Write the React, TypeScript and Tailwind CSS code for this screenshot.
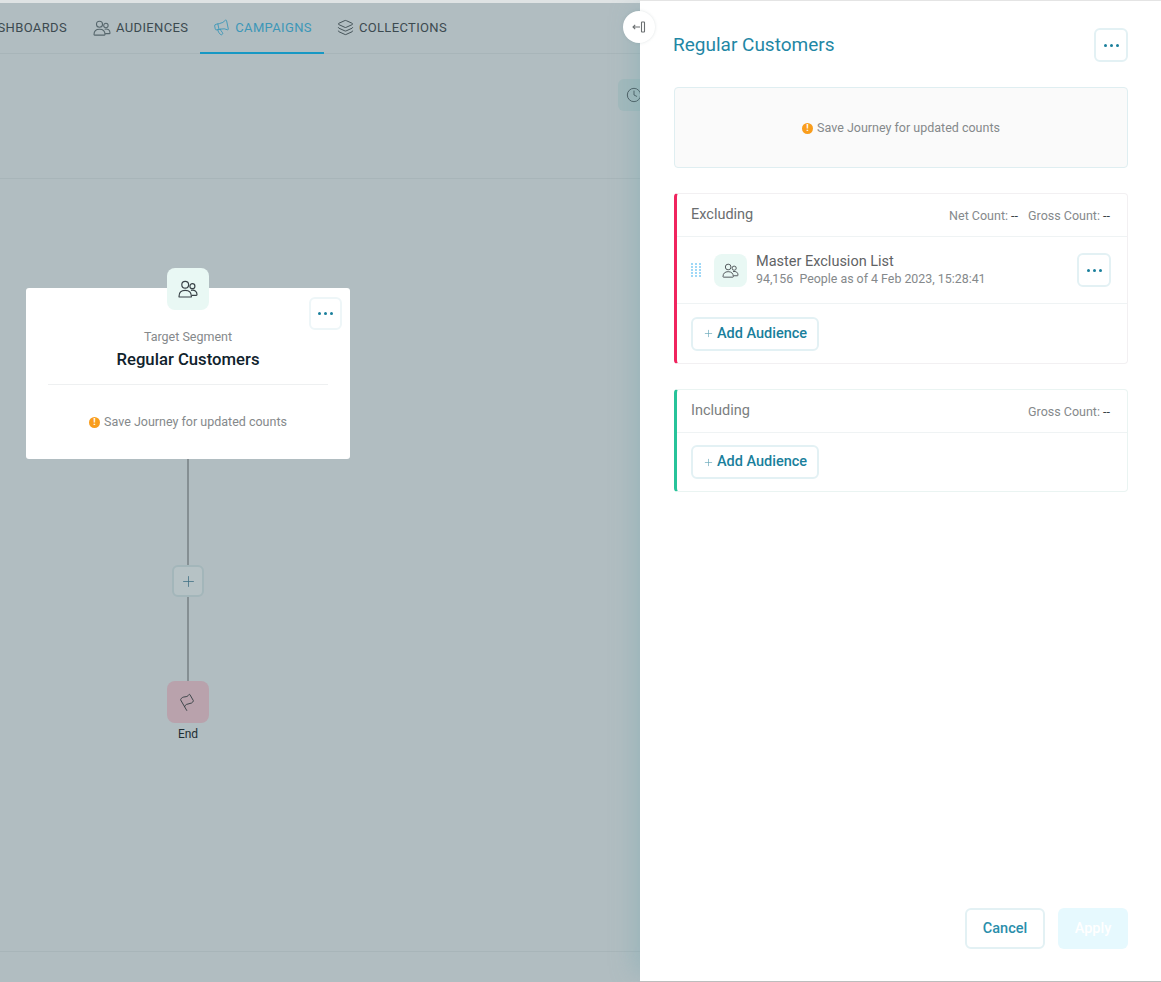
import { Clock, Flag, Layers, Megaphone, Plus } from 'lucide-react'

const font = { fontFamily: 'Roboto, "Liberation Sans", sans-serif' }

function PeopleIcon({ className }: { className?: string }) {
  return (
    <svg viewBox="0 0 20 18" fill="none" stroke="currentColor" strokeWidth="1.2" className={className}>
      <circle cx="7.2" cy="4.8" r="3.4" />
      <circle cx="14.4" cy="6.2" r="2.5" />
      <path d="M1 16.4c0-4 2.4-6 6.2-6s6.2 2 6.2 6c0 .4-.2.6-.6.6H1.6c-.4 0-.6-.2-.6-.6Z" />
      <path d="M13 10.3c3.600-.8 6 1 6 4.200 0 .5-.2.8-.7.8h-4.800" />
    </svg>
  )
}

function Dots() {
  return (
    <span className="flex gap-[3px]">
      <span className="h-[3px] w-[3px] rounded-full bg-[#1a7f9c]" />
      <span className="h-[3px] w-[3px] rounded-full bg-[#1a7f9c]" />
      <span className="h-[3px] w-[3px] rounded-full bg-[#1a7f9c]" />
    </span>
  )
}

function MoreButton({ className = 'h-[34px] w-[34px] border-[#e3f1f4]' }: { className?: string }) {
  return (
    <button className={`flex items-center justify-center rounded-md border-2 bg-white ${className}`}>
      <Dots />
    </button>
  )
}

function SaveNotice() {
  return (
    <div className="flex items-center justify-center gap-[4px] text-[12.5px] text-[#85898b]">
      <span className="flex h-[11px] w-[11px] items-center justify-center rounded-full bg-[#f99d1c] text-[9px] font-bold leading-none text-white">!</span>
      Save Journey for updated counts
    </div>
  )
}

function AddAudience() {
  return (
    <button className="flex h-[34px] w-[128px] items-center justify-center gap-[3px] rounded-md border-2 border-[#e3f1f4] bg-white text-[14.5px] font-medium text-[#1a7f9c]">
      <Plus size={11} strokeWidth={1.5} className="text-[#6aa9bb]" />
      Add Audience
    </button>
  )
}

function Tab({ icon, label, active }: { icon: React.ReactNode; label: string; active?: boolean }) {
  return (
    <div className={`flex h-[51px] shrink-0 items-center gap-[5px] whitespace-nowrap border-b-2 pl-[13px] pr-[12px] text-[13px] tracking-[0.35px] ${active ? 'border-[#1798c4] text-[#3d97b8]' : 'border-transparent text-[#3c4a50]'}`}>
      {icon}
      {label}
    </div>
  )
}

export default function App() {
  return (
    <div style={font} className="flex h-[982px] w-[1161px] overflow-hidden bg-white">
      {/* Dimmed journey canvas */}
      <main className="flex w-[640px] shrink-0 flex-col overflow-hidden border-t-[3px] border-[#dfe3e4] bg-[#b1bdc1]">
        <nav className="flex h-[51px] shrink-0 border-b border-[#a8b5b9]">
          <div className="flex h-[50px] w-[80px] shrink-0 items-center justify-end overflow-hidden whitespace-nowrap pr-[13px] text-[13px] tracking-[0.35px] text-[#3c4a50]">
            <span className="shrink-0">DASHBOARDS</span>
          </div>
          <Tab label="AUDIENCES" icon={<PeopleIcon className="h-[16px] w-[18px] text-[#56666c]" />} />
          <Tab active label="CAMPAIGNS" icon={<Megaphone size={17} strokeWidth={1.2} className="-rotate-12 text-[#3d97b8]" />} />
          <Tab label="COLLECTIONS" icon={<Layers size={17} strokeWidth={1.3} className="text-[#3c4a50]" />} />
        </nav>

        <div className="flex h-[125px] shrink-0 items-start justify-end border-b border-[#a8b5b9] pt-[25px]">
          <button className="-mr-[10px] flex h-[32px] w-[32px] items-center justify-center rounded-md bg-[#a3b9bc]">
            <Clock size={16} strokeWidth={1.3} className="text-[#3c4a50]" />
          </button>
        </div>

        {/* Diagram */}
        <div className="flex h-[773px] shrink-0 flex-col border-b border-[#a8b5b9] pl-[26px] pt-[89px]">
          <div className="flex w-[324px] flex-col items-center">
            <div className="z-10 -mb-[22px] flex h-[42px] w-[42px] items-center justify-center rounded-lg bg-[#e9f8f4]">
              <PeopleIcon className="h-[18px] w-[20px] text-[#3a4348]" />
            </div>
            <section className="relative flex h-[171px] w-[324px] flex-col items-center rounded-[3px] bg-white px-[22px] pt-[41px]">
              <MoreButton className="absolute right-[8px] top-[9px] h-[33px] w-[33px] border-[#eef6f8]" />
              <div className="text-[12.5px] leading-[16px] text-[#85898b]">Target Segment</div>
              <div className="mt-[4px] text-[16.7px] font-medium leading-[22px] text-[#10222c]">Regular Customers</div>
              <div className="mt-[13px] w-full border-t border-[#eef0f1]" />
              <div className="mt-[28px]">
                <SaveNotice />
              </div>
            </section>
            <div className="h-[106px] w-[2px] bg-[#858f93]" />
            <div className="flex h-[32px] w-[32px] items-center justify-center rounded-md border-2 border-[#a3b6ba] bg-[#b6c2c5]">
              <Plus size={17} strokeWidth={1.1} className="text-[#3f7084]" />
            </div>
            <div className="h-[84px] w-[2px] bg-[#858f93]" />
            <div className="flex h-[42px] w-[42px] items-center justify-center rounded-lg bg-[#b9a2ac]">
              <Flag size={16} strokeWidth={1.3} className="-rotate-[30deg] text-[#3a4348]" />
            </div>
            <div className="mt-[3px] text-[12px] leading-[16px] text-[#1f2d33]">End</div>
          </div>
        </div>
      </main>

      {/* Side panel */}
      <aside className="relative z-10 flex w-[521px] shrink-0 flex-col border-b border-t border-b-[#bdbdbd] border-t-[#e4e4e4] bg-white pl-[34px] pr-[33px] pt-[27px] shadow-[-14px_0_22px_-8px_rgba(110,165,175,0.35)]">
        <button className="absolute -left-[17px] top-[10px] flex h-[32px] w-[32px] items-center justify-center rounded-full bg-white text-[#6b6f71] shadow-[0_0_3px_rgba(120,140,145,0.25)]">
          <svg viewBox="0 0 14 12" fill="none" stroke="currentColor" strokeWidth="1.1" className="h-[14px] w-[14px]">
            <path d="M8 6H1M3.200 3.800 1 6l2.200 2.200" />
            <rect x="9.500" y="1" width="3" height="10" rx=".5" />
          </svg>
        </button>

        <header className="flex h-[34px] items-center justify-between">
          <h1 className="-ml-[1px] text-[19px] font-normal text-[#1f87a5]">Regular Customers</h1>
          <MoreButton />
        </header>

        <div className="mt-[25px] flex h-[81px] items-center justify-center rounded border border-[#dfeef1] bg-[#fafafa] pt-[1px]">
          <SaveNotice />
        </div>

        <section className="mt-[25px] flex h-[171px] flex-col rounded-[4px] border border-l-[3px] border-[#f2f0f2] border-l-[#f0245e]">
          <div className="flex h-[43px] items-center justify-between border-b border-[#eff3f4] pl-[14px] pr-[17px]">
            <span className="text-[14.5px] text-[#6a6d6f]">Excluding</span>
            <span className="flex gap-[10px] pt-[2px] text-[12.5px] text-[#85898b]">
              <span>Net Count: <span className="text-[#3a4348]">--</span></span>
              <span>Gross Count: <span className="text-[#3a4348]">--</span></span>
            </span>
          </div>
          <div className="flex h-[67px] items-center border-b border-[#eff3f4] pl-[14px] pr-[16px]">
            <svg viewBox="0 0 10 14" className="h-[14px] w-[10px] fill-[#9fd8f7]">
              {[0, 3, 6, 9, 12].map((y) => (
                <g key={y}>
                  <rect x="0" y={y} width="2" height="2" />
                  <rect x="4" y={y} width="2" height="2" />
                  <rect x="8" y={y} width="2" height="2" />
                </g>
              ))}
            </svg>
            <div className="ml-[13px] flex h-[33px] w-[33px] items-center justify-center rounded-lg bg-[#e9f8f4]">
              <PeopleIcon className="h-[15px] w-[17px] text-[#565c60]" />
            </div>
            <div className="ml-[9px] flex-1">
              <div className="text-[14.5px] leading-[16px] text-[#5f6365]">Master Exclusion List</div>
              <div className="mt-[1px] text-[12.4px] leading-[16px] text-[#85898b]">94,156&nbsp; People as of 4 Feb 2023, 15:28:41</div>
            </div>
            <MoreButton />
          </div>
          <div className="flex flex-1 items-center pl-[14px]">
            <AddAudience />
          </div>
        </section>

        <section className="mt-[25px] flex h-[103px] flex-col rounded-[4px] border border-l-[3px] border-[#eaf4f2] border-l-[#27c39a]">
          <div className="flex h-[43px] items-center justify-between border-b border-[#eff3f4] pl-[14px] pr-[17px]">
            <span className="text-[14.5px] text-[#7b7e80]">Including</span>
            <span className="pt-[2px] text-[12.5px] text-[#85898b]">Gross Count: <span className="text-[#3a4348]">--</span></span>
          </div>
          <div className="flex flex-1 items-center pl-[14px]">
            <AddAudience />
          </div>
        </section>

        <footer className="mt-auto flex justify-end gap-[13px] pb-[32px]">
          <button className="h-[41px] w-[80px] rounded-md border-2 border-[#e3f1f4] bg-white text-[14.5px] font-medium text-[#2a8eab]">Cancel</button>
          <button className="h-[41px] w-[70px] rounded-md bg-[#e6f9fe] text-[14.5px] font-medium text-white">Apply</button>
        </footer>
      </aside>
    </div>
  )
}
